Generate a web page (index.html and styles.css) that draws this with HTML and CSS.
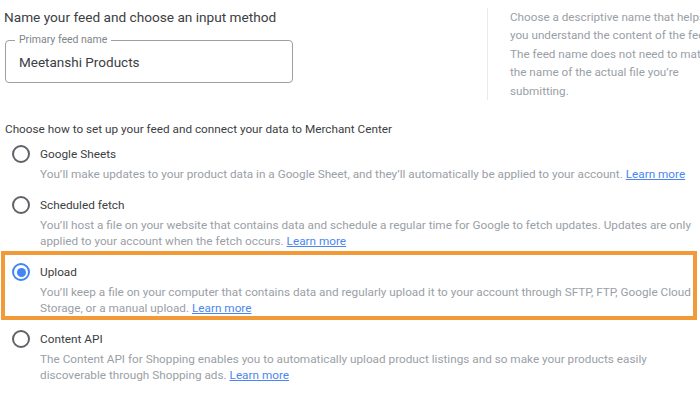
FILE: index.html
```html
<!DOCTYPE html>
<html lang="en">
<head>
  <meta charset="UTF-8">
  <meta name="viewport" content="width=device-width, initial-scale=1.0">
  <title>Create feed - Merchant Center</title>
  <link rel="stylesheet" href="styles.css">
</head>
<body>

<div class="top">
  <div class="name-col">
    <h2 class="title">Name your feed and choose an input method</h2>
    <div class="field">
      <span class="field-label">Primary feed name</span>
      <div class="field-value">Meetanshi Products</div>
    </div>
  </div>
  <div class="help">
    Choose a descriptive name that helps<br>
    you understand the content of the feed.<br>
    The feed name does not need to match<br>
    the name of the actual file you’re<br>
    submitting.
  </div>
</div>

<p class="method-title">Choose how to set up your feed and connect your data to Merchant Center</p>

<div class="options">
  <div class="option">
    <span class="radio"></span>
    <div class="option-text">
      <div class="option-label">Google Sheets</div>
      <div class="option-desc">You’ll make updates to your product data in a Google Sheet, and they’ll automatically be applied to your account. <a href="#">Learn more</a></div>
    </div>
  </div>
  <div class="option">
    <span class="radio"></span>
    <div class="option-text">
      <div class="option-label">Scheduled fetch</div>
      <div class="option-desc">You’ll host a file on your website that contains data and schedule a regular time for Google to fetch updates. Updates are only<br>applied to your account when the fetch occurs. <a href="#">Learn more</a></div>
    </div>
  </div>
  <div class="option selected">
    <span class="radio checked"></span>
    <div class="option-text">
      <div class="option-label">Upload</div>
      <div class="option-desc">You’ll keep a file on your computer that contains data and regularly upload it to your account through SFTP, FTP, Google Cloud<br>Storage, or a manual upload. <a href="#">Learn more</a></div>
    </div>
  </div>
  <div class="option">
    <span class="radio"></span>
    <div class="option-text">
      <div class="option-label">Content API</div>
      <div class="option-desc">The Content API for Shopping enables you to automatically upload product listings and so make your products easily<br>discoverable through Shopping ads. <a href="#">Learn more</a></div>
    </div>
  </div>
</div>

</body>
</html>
```

FILE: styles.css
```css
* {
  margin: 0;
  padding: 0;
  box-sizing: border-box;
  font-family: Roboto, 'Noto Sans', Arial, sans-serif;
}

body {
  background: #fff;
  color: #3c4043;
  width: 700px;
  height: 393px;
  overflow: hidden;
}

.top {
  display: flex;
  padding-top: 8px;
}

.name-col {
  flex: none;
  width: 487px;
  padding-left: 4px;
}

.title {
  font-size: 13.65px;
  font-weight: 400;
  line-height: 18px;
  color: #3c4043;
}

.field {
  position: relative;
  margin-top: 14px;
  margin-left: 1px;
  width: 288px;
  height: 43px;
  border: 1px solid #9aa0a6;
  border-radius: 4px;
}

.field-label {
  position: absolute;
  top: -8px;
  left: 9px;
  padding: 0 4px;
  background: #fff;
  font-size: 10.5px;
  line-height: 14px;
  color: #80868b;
}

.field-value {
  padding: 11px 0 0 13px;
  font-size: 13.5px;
  line-height: 20px;
  color: #3c4043;
}

.help {
  flex: none;
  border-left: 1px solid #e8eaed;
  padding-left: 22px;
  font-size: 11.7px;
  line-height: 18.4px;
  color: #9aa0a6;
  white-space: nowrap;
  height: 92px;
}

.method-title {
  margin-top: 21px;
  padding-left: 5px;
  font-size: 11.75px;
  line-height: 16px;
  color: #3c4043;
}

.options {
  margin-top: 1px;
}

.option {
  display: flex;
  align-items: flex-start;
  gap: 10px;
  padding: 6px 0 7px 12px;
}

.option.selected {
  margin: -5px 3px 3px 1px;
  border: 4px solid #f29a38;
  padding: 7px 0 0 7px;
}

.radio {
  flex: none;
  width: 18px;
  height: 18px;
  margin-top: 1px;
  border: 2px solid #5f6368;
  border-radius: 50%;
  display: flex;
  align-items: center;
  justify-content: center;
}

.radio.checked {
  border-color: #4285f4;
}

.radio.checked::after {
  content: '';
  width: 9px;
  height: 9px;
  border-radius: 50%;
  background: #4285f4;
}

.option-label {
  font-size: 11.8px;
  line-height: 20px;
  color: #3c4043;
  margin-bottom: 2px;
}

.option-desc {
  font-size: 11.75px;
  line-height: 16px;
  color: #9aa0a6;
  white-space: nowrap;
}

.option-desc a {
  color: #4a86f0;
  text-decoration: underline;
}
```
